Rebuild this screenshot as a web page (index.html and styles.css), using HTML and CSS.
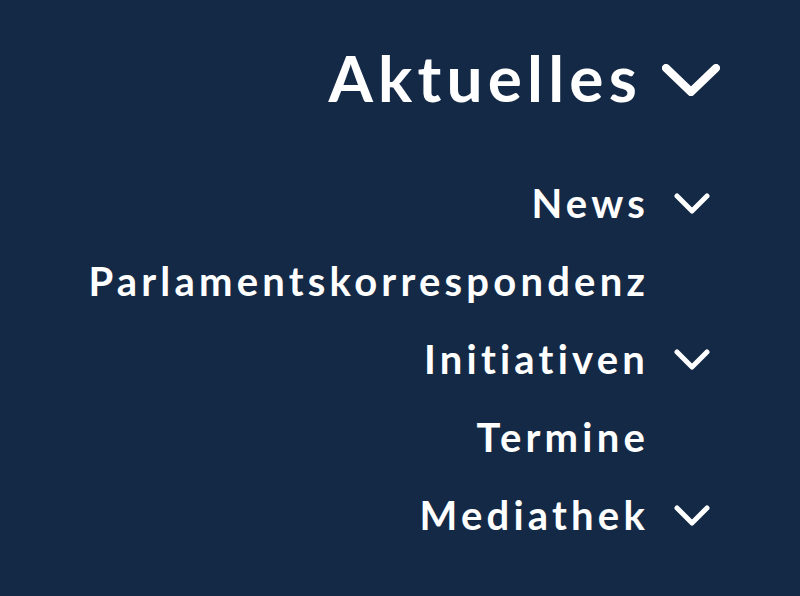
FILE: index.html
```html
<!DOCTYPE html>
<html lang="de">
<head>
<meta charset="utf-8">
<title>Aktuelles</title>
<link rel="stylesheet" href="styles.css">
</head>
<body>
<nav class="menu">
  <div class="menu-head">
    <span class="menu-title">Aktuelles</span>
    <svg class="chev chev-lg" viewBox="0 0 58 32" aria-hidden="true"><path d="M4 4 L29 28 L54 4"/></svg>
  </div>
  <ul class="menu-list">
    <li class="menu-item"><span>News</span><span class="slot"><svg class="chev chev-sm" viewBox="0 0 36 22" aria-hidden="true"><path d="M3 3 L18 18 L33 3"/></svg></span></li>
    <li class="menu-item"><span>Parlamentskorrespondenz</span><span class="slot"></span></li>
    <li class="menu-item"><span>Initiativen</span><span class="slot"><svg class="chev chev-sm" viewBox="0 0 36 22" aria-hidden="true"><path d="M3 3 L18 18 L33 3"/></svg></span></li>
    <li class="menu-item"><span>Termine</span><span class="slot"></span></li>
    <li class="menu-item"><span>Mediathek</span><span class="slot"><svg class="chev chev-sm" viewBox="0 0 36 22" aria-hidden="true"><path d="M3 3 L18 18 L33 3"/></svg></span></li>
  </ul>
</nav>
</body>
</html>
```

FILE: styles.css
```css
html, body {
  margin: 0;
  height: 100%;
  background: #142946;
}

.menu {
  box-sizing: border-box;
  width: 800px;
  height: 596px;
  padding: 40px 80px 0 0;
  display: flex;
  flex-direction: column;
  align-items: flex-end;
  color: #ffffff;
  font-family: Lato, "Noto Sans", sans-serif;
  font-weight: 700;
}

.menu-head {
  display: flex;
  align-items: center;
  gap: 20px;
  height: 76px;
}

.menu-title {
  font-size: 64px;
  letter-spacing: 5.2px;
  line-height: 1;
}

.chev {
  display: block;
  fill: none;
  stroke: #ffffff;
  stroke-linecap: round;
  stroke-linejoin: round;
}

.chev-lg {
  width: 58px;
  height: 32px;
  stroke-width: 8;
  margin-top: 4px;
}

.chev-sm {
  width: 36px;
  height: 22px;
  stroke-width: 5;
  margin-top: 2px;
}

.menu-list {
  list-style: none;
  margin: 48px 0 0;
  padding: 0;
  display: flex;
  flex-direction: column;
  align-items: flex-end;
}

.menu-item {
  display: flex;
  align-items: center;
  height: 78px;
  font-size: 40px;
  letter-spacing: 4.2px;
}

.slot {
  width: 71px;
  display: flex;
  justify-content: flex-start;
  padding-left: 25px;
  box-sizing: border-box;
}
```
